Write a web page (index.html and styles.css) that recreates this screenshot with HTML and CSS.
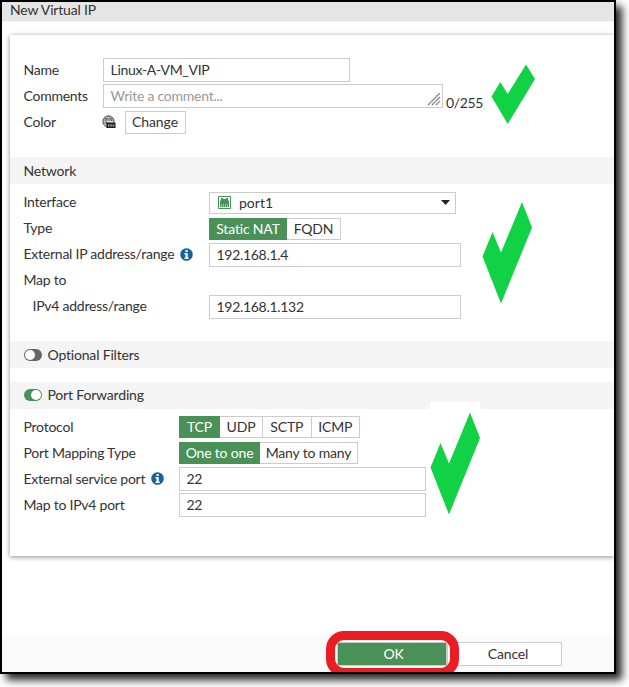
FILE: index.html
```html
<!DOCTYPE html>
<html lang="en">
<head>
<meta charset="utf-8">
<title>New Virtual IP</title>
<link rel="stylesheet" href="styles.css">
</head>
<body>
<main class="window">
  <header class="title">New Virtual IP</header>
  <form class="card">
    <section class="rows general">
      <div class="row"><label>Name</label><div class="input name">Linux-A-VM_VIP</div></div>
      <div class="row"><label>Comments</label><div class="input comments">Write a comment...
        <svg class="grip" width="14" height="14" viewBox="0 0 14 14"><path d="M1 13 13 1M5 13l8-8M9 13l4-4" stroke="#777" stroke-width="1.4" stroke-dasharray="2 .4" fill="none"/></svg></div><span class="count">0/255</span></div>
      <div class="row"><label>Color</label>
        <svg class="globe" width="14" height="14" viewBox="0 0 14 14"><circle cx="6.5" cy="6.5" r="5.6" fill="#ddd" stroke="#444"/><path d="M1 5h11M1 8h6M6.5 1C3 4 3 9 6.5 12M6.5 1c2 1.500 3 3 3 5M2 2.800c3 1.500 6 1.500 9 0" fill="none" stroke="#555" stroke-width=".8"/><path d="M4.500 7.500h9V13h-9z" fill="#222"/><path d="M6 9.500h1.500v2H6zM8.300 9.500h1.500v2H8.300zM10.600 9.500h1.500v2h-1.500z" fill="#aaa"/></svg>
        <button type="button" class="change">Change</button></div>
    </section>
    <h2 class="section">Network</h2>
    <section class="rows network">
      <div class="row"><label>Interface</label><div class="select">
        <svg width="13" height="13" viewBox="0 0 13 13"><path d="M.5.5h12v12H.500z" fill="#fff" stroke="#4a9158"/><path d="M2 11V4.500h1V2h2v1h3V2h2v2.500h1V11z" fill="#4a9158"/><path d="M3.500 8v3M5.500 8v3M7.500 8v3M9.500 8v3" stroke="#c3dcc8" stroke-width=".7"/></svg>
        <span>port1</span><svg class="caret" width="9" height="5" viewBox="0 0 9 5"><path d="M0 0h9L4.500 5z" fill="#222"/></svg></div></div>
      <div class="row"><label>Type</label><div class="group nat"><b class="on">Static NAT</b><b>FQDN</b></div></div>
      <div class="row"><label>External IP address/range<svg class="info" width="13" height="13" viewBox="0 0 13 13"><circle cx="6.500" cy="6.500" r="6.300" fill="#17639c"/><path d="M5.500 2h2.200v2H5.500zM4.500 5h3.200v4.500h1V11H4.500V9.500h1V6.500h-1z" fill="#fff"/></svg></label><div class="input address">192.168.1.4</div></div>
      <div class="row"><label>Map to</label></div>
      <div class="row"><label class="nested">IPv4 address/range</label><div class="input address">192.168.1.132</div></div>
    </section>
    <h2 class="section filters"><span class="toggle"></span>Optional Filters</h2>
    <h2 class="section"><span class="toggle active"></span>Port Forwarding</h2>
    <section class="rows ports">
      <div class="row"><label>Protocol</label><div class="group protocol"><b class="on">TCP</b><b>UDP</b><b>SCTP</b><b>ICMP</b></div></div>
      <div class="row"><label>Port Mapping Type</label><div class="group mapping"><b class="on">One to one</b><b>Many to many</b></div></div>
      <div class="row"><label>External service port<svg class="info" width="13" height="13" viewBox="0 0 13 13"><circle cx="6.500" cy="6.500" r="6.300" fill="#17639c"/><path d="M5.500 2h2.200v2H5.500zM4.500 5h3.200v4.500h1V11H4.500V9.500h1V6.500h-1z" fill="#fff"/></svg></label><div class="input port">22</div></div>
      <div class="row"><label>Map to IPv4 port</label><div class="input port">22</div></div>
    </section>
  </form>
  <footer class="footer">
    <button class="ok">OK</button><button class="cancel">Cancel</button>
    <span class="ring"></span>
  </footer>
  <svg class="marks" width="612" height="670" viewBox="2 2 612 670">
    <path d="M430 402h50v60h-50z" fill="#fff"/>
    <g fill="#11d245">
      <path d="M526 64.500 535 79 507.700 124 491.500 96.500 500.300 82 507.700 94z"/>
      <path d="M522 202 532 227.500 501 303.500 482.500 256.500 492.500 232 501 252.500z"/>
      <path d="M470 412.500 480 438 449 514.500 430.500 467.500 440.500 443 449 463.500z"/>
    </g>
  </svg>
</main>
</body>
</html>
```
FILE: styles.css
```css
* { box-sizing: border-box; }
html { height: 687px; overflow: hidden; }
body { margin: 0; height: 687px; background: #fff; font: 14px/20px Lato, sans-serif; letter-spacing: -.18px; color: #333; }
.window { position: relative; display: flex; flex-direction: column; width: 616px; height: 674px; border: 2px solid #000; background: #fff; box-shadow: 6px 6px 8px rgba(0,0,0,.85); }
.title { height: 20px; padding-left: 8px; line-height: 16px; background: #e5e5e5; border-bottom: 1px solid #f1f1f1; }
.card { height: 521px; margin: 13px 0 0 8px; background: #fff; box-shadow: 0 1px 5px rgba(0,0,0,.45); clip-path: inset(-8px 0 -8px -8px); }
.rows { padding-left: 13.500px; }
.general { height: 122px; padding-top: 22px; }
.row { display: flex; align-items: center; height: 26px; }
label { display: flex; align-items: center; flex: none; width: 185.500px; white-space: nowrap; letter-spacing: -.24px; }
.general label { width: 79.500px; }
.ports label { width: 155.500px; }
.network label { margin-top: -2px; }
label.nested { padding-left: 9px; }
.info { margin-left: 6px; }
.input { position: relative; height: 24px; padding-left: 6.500px; line-height: 22px; border: 1px solid #ccc; background: #fff; white-space: nowrap; letter-spacing: -.3px; }
.name { width: 247px; }
.comments { width: 340px; color: #999; letter-spacing: -.24px; }
.address { width: 252px; }
.port { width: 247px; }
.grip { position: absolute; right: 1px; bottom: 1px; }
.count { margin: 14px 0 0 3px; letter-spacing: -.35px; }
.globe { margin: 0 8.500px 0 -1px; }
button { font: inherit; letter-spacing: inherit; line-height: 20px; color: #333; border: 1px solid #ccc; background: #fff; padding: 0; }
.change { width: 61px; height: 23px; letter-spacing: -.1px; }
.section { display: flex; align-items: center; height: 27px; margin: 0; padding-left: 13.500px; font-size: 14px; font-weight: 400; background: #f4f4f4; }
.network { height: 157px; padding-top: 6px; }
.select { display: flex; align-items: center; width: 247px; height: 22px; margin-top: -1px; padding: 0 5px 0 8px; border: 1px solid #ccc; letter-spacing: 0; }
.select span { margin-left: 8px; }
.caret { margin-left: auto; }
.group { display: flex; height: 22px; }
.group b { display: flex; justify-content: center; border: 1px solid #ccc; border-left-width: 0; font-weight: 400; line-height: 20px; white-space: nowrap; }
.group .on { color: #fff; background: #4a9158; border-color: #4a9158; border-left-width: 1px; }
.nat { margin-top: -1px; }
.nat b { width: 54px; }
.nat .on { width: 78px; }
.protocol b { width: 43px; }
.protocol .on { width: 41px; }
.protocol b:nth-child(n+3) { width: 48.500px; }
.mapping b { width: 98px; }
.mapping .on { width: 81px; }
.filters { margin-bottom: 13.500px; }
.toggle { display: flex; width: 18px; height: 12px; margin-right: 6px; padding: 1px; border-radius: 6px; background: #666; }
.toggle::after { content: ""; width: 10px; height: 10px; border-radius: 50%; background: #fff; }
.active { justify-content: flex-end; background: #4a9158; }
.ports { padding-top: 5px; }
.footer { position: relative; display: flex; height: 37px; margin-top: auto; padding: 7px 0 0 335px; background: #fafafa; clip-path: inset(-6px 0 0 0); }
.ok { width: 110px; height: 24px; padding-left: 3px; color: #fff; background: #4a9158; border-color: #ccc; }
.cancel { width: 115px; height: 24px; padding-left: 7px; }
.ring { position: absolute; left: 324px; top: -4px; width: 133px; height: 46px; border: 9px solid #ec1c24; border-radius: 18px; }
.marks { position: absolute; left: 0; top: 0; pointer-events: none; }
```
